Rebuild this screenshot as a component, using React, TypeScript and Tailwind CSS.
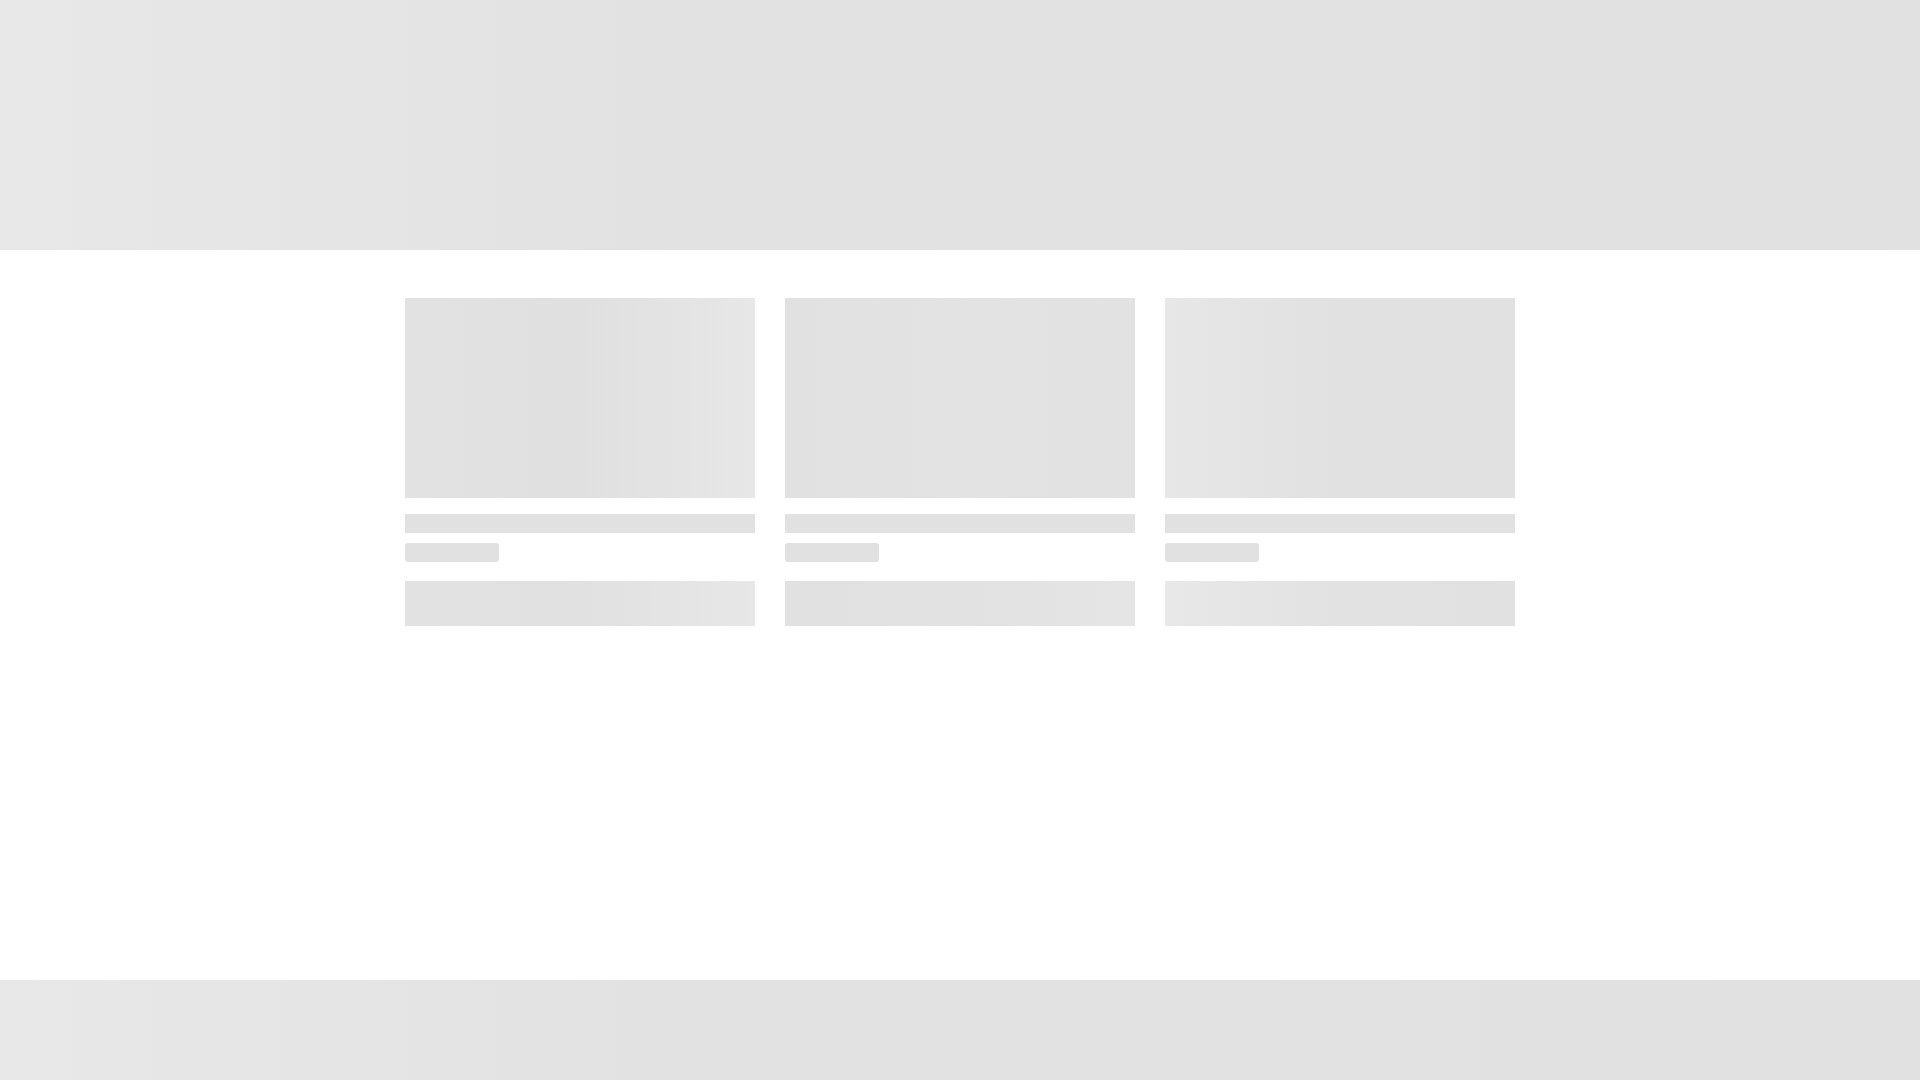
const CARDS = [
  { img: "bg-linear-to-r from-[#e2e2e2] via-[#e0e0e0] to-[#e7e7e7]", btn: "bg-linear-to-r from-[#e2e2e2] via-[#e1e1e1] to-[#e7e7e7]" },
  { img: "bg-linear-to-r from-[#e1e1e1] via-[#e3e3e3] to-[#e2e2e2]", btn: "bg-linear-to-r from-[#e1e1e1] via-[#e2e2e2] to-[#e5e5e5]" },
  { img: "bg-linear-to-r from-[#e7e7e7] via-[#e1e1e1] to-[#e1e1e1]", btn: "bg-linear-to-r from-[#e8e8e8] via-[#e2e2e2] to-[#e1e1e1]" },
];

function SkeletonCard({ img, btn }: { img: string; btn: string }) {
  return (
    <div className="flex w-[350px] flex-col">
      {/* image placeholder */}
      <div className={`h-[200px] w-full ${img}`} />
      {/* title */}
      <div className="mt-4 h-[19px] w-full bg-[#e1e1e1]" />
      {/* price */}
      <div className="mt-[10px] h-[19px] w-[94px] rounded-[3px] bg-[#e1e1e1]" />
      {/* button */}
      <div className={`mt-[19px] h-[45px] w-full ${btn}`} />
    </div>
  );
}

export default function App() {
  return (
    <div className="flex min-h-screen flex-col bg-white">
      <header className="h-[250px] w-full bg-linear-to-r from-[#e8e8e8] via-[#e2e2e2] via-35% to-[#e1e1e1]" />
      <main className="flex flex-1 justify-center pt-12">
        <div className="flex gap-[30px]">
          {CARDS.map((c, i) => (
            <SkeletonCard key={i} img={c.img} btn={c.btn} />
          ))}
        </div>
      </main>
      <footer className="h-[100px] w-full bg-linear-to-r from-[#e8e8e8] via-[#e2e2e2] via-35% to-[#e1e1e1]" />
    </div>
  );
}
